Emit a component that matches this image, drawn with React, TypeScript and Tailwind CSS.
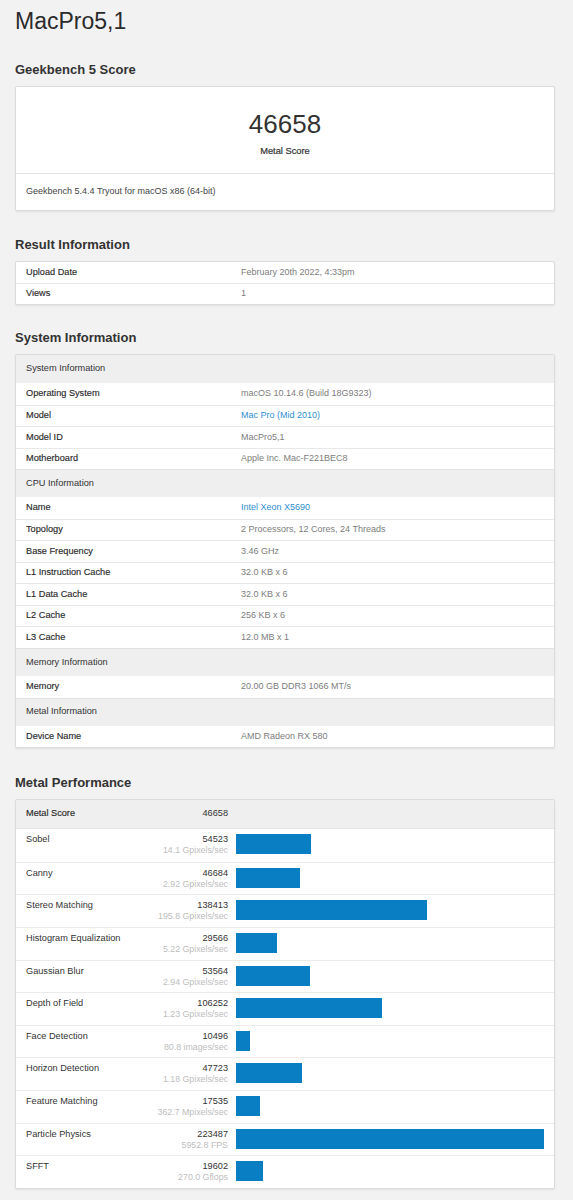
import React from "react";

type InfoRow = { kind: "head"; label: string } | { kind: "row"; label: string; value: string; link?: boolean };

const systemRows: InfoRow[] = [
  { kind: "head", label: "System Information" },
  { kind: "row", label: "Operating System", value: "macOS 10.14.6 (Build 18G9323)" },
  { kind: "row", label: "Model", value: "Mac Pro (Mid 2010)", link: true },
  { kind: "row", label: "Model ID", value: "MacPro5,1" },
  { kind: "row", label: "Motherboard", value: "Apple Inc. Mac-F221BEC8" },
  { kind: "head", label: "CPU Information" },
  { kind: "row", label: "Name", value: "Intel Xeon X5690", link: true },
  { kind: "row", label: "Topology", value: "2 Processors, 12 Cores, 24 Threads" },
  { kind: "row", label: "Base Frequency", value: "3.46 GHz" },
  { kind: "row", label: "L1 Instruction Cache", value: "32.0 KB x 6" },
  { kind: "row", label: "L1 Data Cache", value: "32.0 KB x 6" },
  { kind: "row", label: "L2 Cache", value: "256 KB x 6" },
  { kind: "row", label: "L3 Cache", value: "12.0 MB x 1" },
  { kind: "head", label: "Memory Information" },
  { kind: "row", label: "Memory", value: "20.00 GB DDR3 1066 MT/s" },
  { kind: "head", label: "Metal Information" },
  { kind: "row", label: "Device Name", value: "AMD Radeon RX 580" },
];

const perf = [
  { name: "Sobel", score: 54523, unit: "14.1 Gpixels/sec" },
  { name: "Canny", score: 46684, unit: "2.92 Gpixels/sec" },
  { name: "Stereo Matching", score: 138413, unit: "195.8 Gpixels/sec" },
  { name: "Histogram Equalization", score: 29566, unit: "5.22 Gpixels/sec" },
  { name: "Gaussian Blur", score: 53564, unit: "2.94 Gpixels/sec" },
  { name: "Depth of Field", score: 106252, unit: "1.23 Gpixels/sec" },
  { name: "Face Detection", score: 10496, unit: "80.8 images/sec" },
  { name: "Horizon Detection", score: 47723, unit: "1.18 Gpixels/sec" },
  { name: "Feature Matching", score: 17535, unit: "362.7 Mpixels/sec" },
  { name: "Particle Physics", score: 223487, unit: "5952.8 FPS" },
  { name: "SFFT", score: 19602, unit: "270.0 Gflops" },
];

const maxScore = 223487;

const labelCls = "text-[9.2px] text-[#2a2a2a] [-webkit-text-stroke:0.15px_#2a2a2a]";

function Heading({ children, mt }: { children: React.ReactNode; mt: string }) {
  return (
    <h2 className={`${mt} mb-[8px] h-[16px] leading-[16px] text-[13px] font-bold text-[#333]`}>{children}</h2>
  );
}

function Card({ children }: { children: React.ReactNode }) {
  return (
    <div className="bg-white border border-[#dcdcdc] rounded-[2px] shadow-[0_1px_2px_rgba(0,0,0,0.08)] overflow-hidden">
      {children}
    </div>
  );
}

export default function App() {
  return (
    <div
      className="min-h-screen bg-[#f2f2f2] pl-[15px] pr-[18px] pt-[7px] pb-[20px]"
      style={{ fontFamily: '"Liberation Sans", Arial, sans-serif' }}
    >
      <h1 className="h-[28px] leading-[28px] text-[23px] text-[#2b2b2b] font-normal">MacPro5,1</h1>

      <Heading mt="mt-[27px]">Geekbench 5 Score</Heading>
      <Card>
        <div className="flex flex-col items-center pt-[22px] pb-[16px]">
          <div className="h-[30px] leading-[30px] text-[26px] text-[#333]">46658</div>
          <div className="mt-[6px] h-[12px] leading-[12px] text-[9.3px] text-[#333] [-webkit-text-stroke:0.2px_#333]">
            Metal Score
          </div>
        </div>
        <div className="border-t border-[#e3e3e3] h-[37px] flex items-center px-[10px] text-[9px] text-[#444]">
          Geekbench 5.4.4 Tryout for macOS x86 (64-bit)
        </div>
      </Card>

      <Heading mt="mt-[26px]">Result Information</Heading>
      <Card>
        <div className="flex items-center h-[21px] px-[10px]">
          <div className={`w-[215px] ${labelCls}`}>Upload Date</div>
          <div className="text-[9px] text-[#7d7d7d]">February 20th 2022, 4:33pm</div>
        </div>
        <div className="flex items-center h-[21px] px-[10px] border-t border-[#e6e6e6]">
          <div className={`w-[215px] ${labelCls}`}>Views</div>
          <div className="text-[9px] text-[#7d7d7d]">1</div>
        </div>
      </Card>

      <Heading mt="mt-[25px]">System Information</Heading>
      <Card>
        {systemRows.map((r, i) =>
          r.kind === "head" ? (
            <div
              key={i}
              className={`flex items-center h-[28.2px] px-[10px] bg-[#efefef] text-[9.2px] text-[#333] ${i > 0 ? "border-t border-[#e2e2e2]" : ""}`}
            >
              {r.label}
            </div>
          ) : (
            <div
              key={i}
              className={`flex items-center h-[21.5px] px-[10px] ${systemRows[i - 1].kind === "row" ? "border-t border-[#e8e8e8]" : ""}`}
            >
              <div className={`w-[215px] ${labelCls}`}>{r.label}</div>
              <div className={`text-[9px] ${r.link ? "text-[#2d8fd0]" : "text-[#7d7d7d]"}`}>{r.value}</div>
            </div>
          )
        )}
      </Card>

      <Heading mt="mt-[27px]">Metal Performance</Heading>
      <Card>
        <div className="flex items-center h-[29px] px-[10px] bg-[#efefef] border-b border-[#e2e2e2]">
          <div className="w-[202px] flex justify-between items-center">
            <span className={labelCls}>Metal Score</span>
            <span className="text-[9.2px] text-[#333]">46658</span>
          </div>
        </div>
        {perf.map((p, i) => (
          <div key={p.name} className={`flex h-[32.6px] px-[10px] ${i > 0 ? "border-t border-[#ebebeb]" : ""}`}>
            <div className="w-[202px] flex justify-between pt-[4px]">
              <span className="text-[9.2px] leading-[12px] text-[#333]">{p.name}</span>
              <div className="flex flex-col items-end">
                <span className="text-[9.2px] leading-[12px] text-[#333]">{p.score}</span>
                <span className="text-[8.8px] leading-[11px] text-[#bdbdbd]">{p.unit}</span>
              </div>
            </div>
            <div className="flex-1 ml-[8px] pt-[5px]">
              <div className="h-[20px] bg-[#0a7ec2]" style={{ width: `${(p.score / maxScore) * 100}%` }} />
            </div>
          </div>
        ))}
      </Card>
    </div>
  );
}
